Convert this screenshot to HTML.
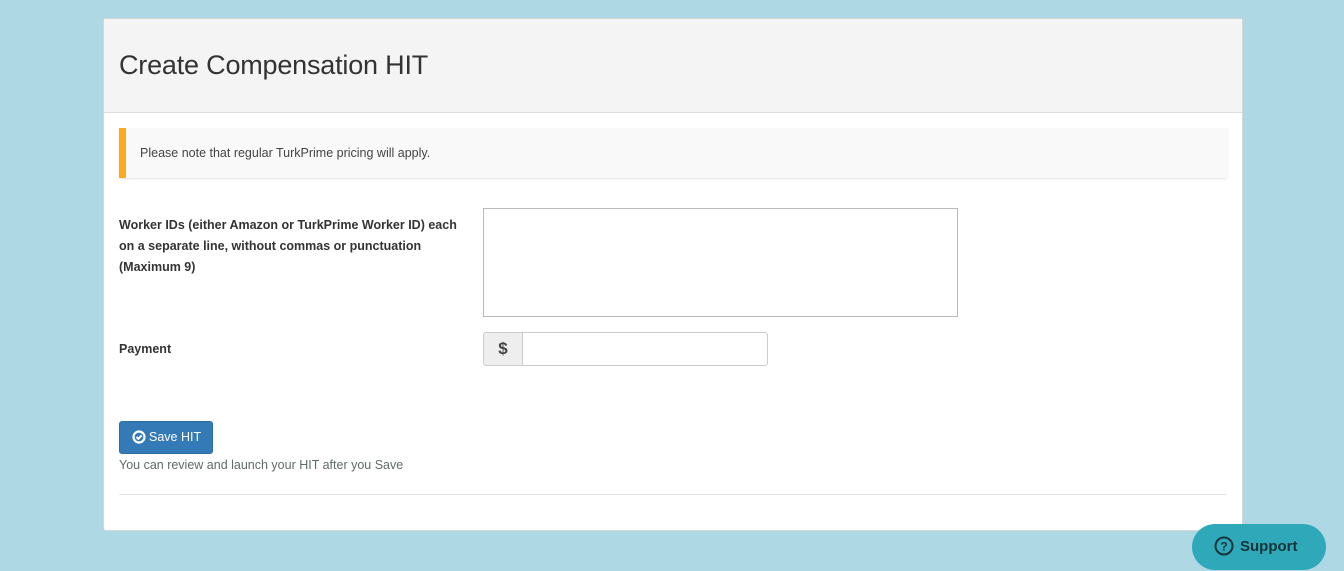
<!DOCTYPE html>
<html><head><meta charset="utf-8"><style>
*{box-sizing:border-box;margin:0;padding:0}
body{width:1344px;height:571px;background:#add8e4;font-family:"Liberation Sans",sans-serif;position:relative;overflow:hidden;color:#333}
.panel{position:absolute;left:103px;top:18px;width:1140px;height:513px;background:#fff;border:1px solid #d6d6d6;border-radius:3px}
.head{position:absolute;left:0;top:0;width:100%;height:94px;background:#f4f4f4;border-bottom:1px solid #ddd}
.head h1{position:absolute;left:15px;top:31px;font-size:27px;font-weight:normal;color:#333;letter-spacing:-0.2px}
.note{position:absolute;left:15px;top:109px;width:1108px;height:50px;background:#f9f9f9;border-left:7px solid #f9ab1d;box-shadow:0 1px 2px rgba(0,0,0,.12)}
.note span{position:absolute;left:14px;top:18px;font-size:12.5px;color:#444}
.lbl{position:absolute;left:15px;font-size:12.5px;font-weight:bold;color:#333;line-height:21px}
.ta{position:absolute;left:379px;top:189px;width:475px;height:109px;border:1px solid #bbb}
.addon{position:absolute;left:379px;top:313px;width:40px;height:34px;background:#eee;border:1px solid #ccc;border-radius:3px 0 0 3px;font-size:17px;font-weight:bold;text-align:center;line-height:32px;color:#444}
.inp{position:absolute;left:418px;top:313px;width:246px;height:34px;border:1px solid #ccc;border-radius:0 3px 3px 0}
.btn{position:absolute;left:15px;top:402px;width:94px;height:33px;background:#337ab7;border:1px solid #2e6da4;border-radius:3px;color:#fff;font-size:12.5px;line-height:31px;padding-left:12px}
.btn svg{vertical-align:-3px;margin-right:3px}
.help{position:absolute;left:15px;top:439px;font-size:12.5px;color:#5f6b6a}
.hr{position:absolute;left:15px;top:475px;width:1108px;border-top:1px solid #e8e8e8}
.sup{position:absolute;left:1192px;top:524px;width:134px;height:46px;background:#2fa9b9;border-radius:23px;color:#17343a;font-weight:bold;font-size:15px;line-height:46px;padding-left:22px}
.sup svg{vertical-align:-5px;margin-right:6px}
</style></head><body>
<div class="panel">
<div class="head"><h1>Create Compensation HIT</h1></div>
<div class="note"><span>Please note that regular TurkPrime pricing will apply.</span></div>
<div class="lbl" style="top:196px">Worker IDs (either Amazon or TurkPrime Worker ID) each<br>on a separate line, without commas or punctuation<br>(Maximum 9)</div>
<div class="ta"></div>
<div class="lbl" style="top:320px">Payment</div>
<div class="addon">$</div><div class="inp"></div>
<div class="btn"><svg width="14" height="14" viewBox="0 0 14 14"><circle cx="7" cy="7" r="5.5" fill="none" stroke="#fff" stroke-width="2.2"/><path d="M4.5 7l1.8 1.8L9.6 5.4" fill="none" stroke="#fff" stroke-width="2"/></svg>Save HIT</div>
<div class="help">You can review and launch your HIT after you Save</div>
<div class="hr"></div>
</div>
<div class="sup"><svg width="20" height="20" viewBox="0 0 20 20"><circle cx="10" cy="10" r="8.5" fill="none" stroke="#17343a" stroke-width="2"/><text x="10" y="14.5" font-size="12" font-weight="bold" text-anchor="middle" fill="#17343a" font-family="Liberation Sans">?</text></svg>Support</div>
</body></html>
